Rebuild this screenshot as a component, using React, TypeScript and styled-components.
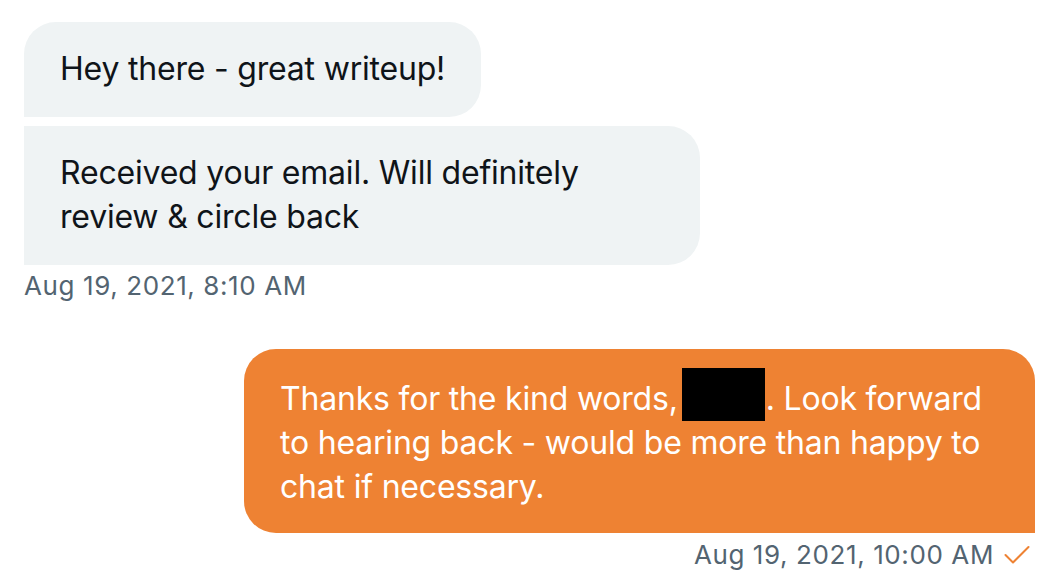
import React, { FC } from "react";
import styled, { createGlobalStyle, css } from "styled-components";

const GlobalStyle = createGlobalStyle`
  html, body {
    margin: 0;
    padding: 0;
    background: #ffffff;
  }
`;

const Thread = styled.div`
  display: flex;
  flex-direction: column;
  padding: 22px 19px 0 24px;
  font-family: Inter, "Liberation Sans", sans-serif;
`;

const Group = styled.div<{ $out?: boolean }>`
  display: flex;
  flex-direction: column;
  align-items: ${(p) => (p.$out ? "flex-end" : "flex-start")};
  gap: 9px;
  margin-top: ${(p) => (p.$out ? "47px" : "0")};
`;

const Bubble = styled.div<{ $out?: boolean; $width?: number; $first?: boolean }>`
  box-sizing: border-box;
  width: ${(p) => (p.$width ? `${p.$width}px` : "auto")};
  padding: 25px 36px 26px;
  font-size: 32px;
  line-height: 44px;
  letter-spacing: -0.2px;
  border-radius: 32px;

  ${(p) =>
    p.$out
      ? css`
          padding-top: 28px;
          padding-bottom: 24px;
          background: #ee8233;
          color: #ffffff;
          border-bottom-right-radius: 0;
        `
      : css`
          background: #eff3f4;
          color: #0f1419;
          ${!p.$first && "border-top-left-radius: 0;"}
          border-bottom-left-radius: 0;
        `}
`;

// black box hiding a name; negative margins keep it from growing the line
const Redacted = styled.span`
  display: inline-block;
  width: 83px;
  height: 53px;
  margin: -10px 1px -11px 4px;
  background: #000000;
  vertical-align: baseline;
`;

const Meta = styled.div<{ $out?: boolean }>`
  display: flex;
  align-items: center;
  gap: 10px;
  margin-top: ${(p) => (p.$out ? "-3px" : "5px")};
  padding-right: ${(p) => (p.$out ? "5px" : "0")};
  font-size: 26px;
  line-height: 32px;
  letter-spacing: 0.6px;
  color: #536471;
`;

const CheckIcon = () => (
  <svg width="26" height="20" viewBox="0 0 26 20" fill="none">
    <polyline
      points="1.5,10 9,17.5 24.5,2"
      stroke="#ee8233"
      strokeWidth="2"
      strokeLinecap="round"
      strokeLinejoin="round"
    />
  </svg>
);

const App: FC = () => (
  <>
    <GlobalStyle />
    <Thread>
      <Group>
        <Bubble $first>Hey there - great writeup!</Bubble>
        <Bubble $width={676}>
          Received your email. Will definitely review &amp; circle back
        </Bubble>
      </Group>
      <Meta>Aug 19, 2021, 8:10 AM</Meta>

      <Group $out>
        <Bubble $out $width={791}>
          Thanks for the kind words,<Redacted />. Look forward to hearing back -
          would be more than happy to chat if necessary.
        </Bubble>
        <Meta $out>
          Aug 19, 2021, 10:00 AM
          <CheckIcon />
        </Meta>
      </Group>
    </Thread>
  </>
);

export default App;
